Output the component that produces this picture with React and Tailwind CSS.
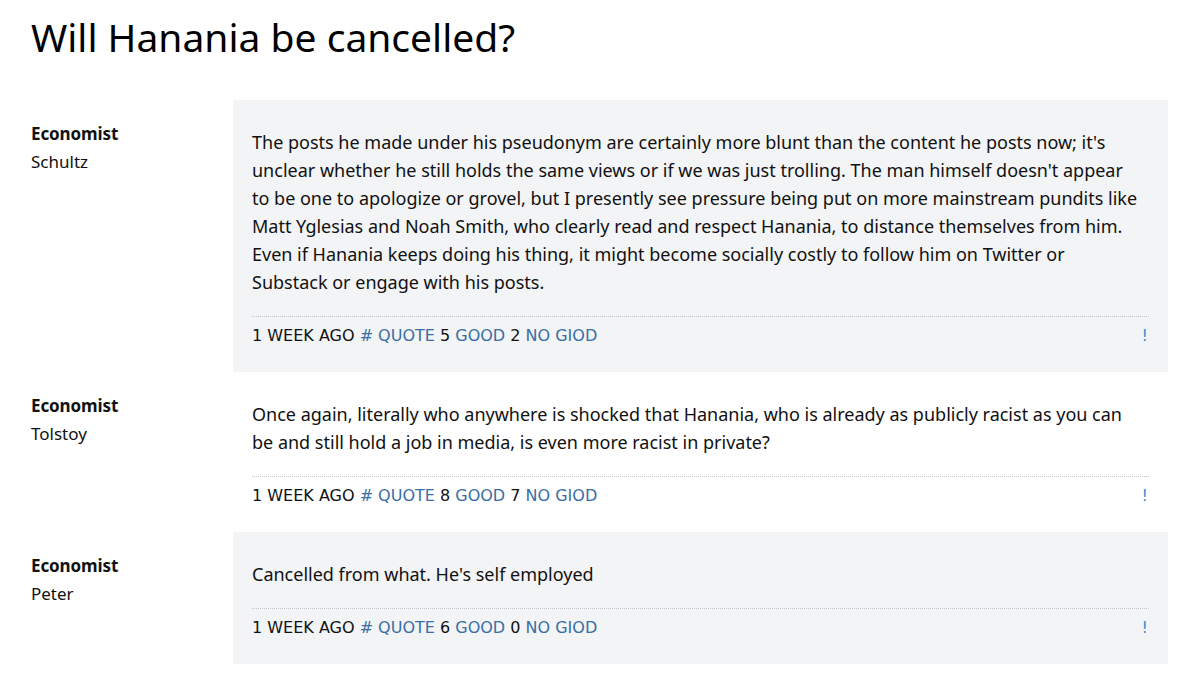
const posts = [
  {
    name: "Schultz",
    lines: [
      "The posts he made under his pseudonym are certainly more blunt than the content he posts now; it's",
      "unclear whether he still holds the same views or if we was just trolling. The man himself doesn't appear",
      "to be one to apologize or grovel, but I presently see pressure being put on more mainstream pundits like",
      "Matt Yglesias and Noah Smith, who clearly read and respect Hanania, to distance themselves from him.",
      "Even if Hanania keeps doing his thing, it might become socially costly to follow him on Twitter or",
      "Substack or engage with his posts.",
    ],
    good: 5,
    bad: 2,
    shaded: true,
  },
  {
    name: "Tolstoy",
    lines: [
      "Once again, literally who anywhere is shocked that Hanania, who is already as publicly racist as you can",
      "be and still hold a job in media, is even more racist in private?",
    ],
    good: 8,
    bad: 7,
    shaded: false,
  },
  {
    name: "Peter",
    lines: ["Cancelled from what. He's self employed"],
    good: 6,
    bad: 0,
    shaded: true,
  },
];

function Post({ post }) {
  return (
    <div className="flex">
      <div className="w-[202px] shrink-0 pt-[20px] text-[#111]">
        <div className="text-[17px] leading-[28px] font-bold tracking-[-0.1px]">Economist</div>
        <div className="text-[17px] leading-[28px]">{post.name}</div>
      </div>
      <div className={"w-[935px] shrink-0 min-w-0 overflow-hidden px-[19px] pt-[28px] pb-[24px] " + (post.shaded ? "bg-[#f3f4f6]" : "bg-white")}>
        <p className="text-[18px] leading-[28px] text-[#111] whitespace-nowrap">
          {post.lines.map((l, i) => (
            <span key={i}>
              {l}
              {i < post.lines.length - 1 && <br />}
            </span>
          ))}
        </p>
        <div className="mt-[20px] border-t border-dotted border-[#c4c4c4] pt-[7px] flex items-center justify-between text-[16px] leading-[24px] [font-family:'DejaVu_Sans',sans-serif]">
          <div className="text-[#111]">
            1 WEEK AGO <span className="text-[#3a6ea5]"># QUOTE</span> {post.good}{" "}
            <span className="text-[#3a6ea5]">GOOD</span> {post.bad}{" "}
            <span className="text-[#3a6ea5]">NO GIOD</span>
          </div>
          <span className="text-[#3a8fd0] pr-[1px]">!</span>
        </div>
      </div>
    </div>
  );
}

export default function App() {
  return (
    <div className="bg-white min-h-[679px] pl-[31px] pr-[26px] pt-[13px] [font-family:'Noto_Sans',sans-serif]">
      <h1 className="text-[39px] leading-[48px] font-normal text-black mb-[39px]">Will Hanania be cancelled?</h1>
      {posts.map((p) => (
        <Post key={p.name} post={p} />
      ))}
    </div>
  );
}
